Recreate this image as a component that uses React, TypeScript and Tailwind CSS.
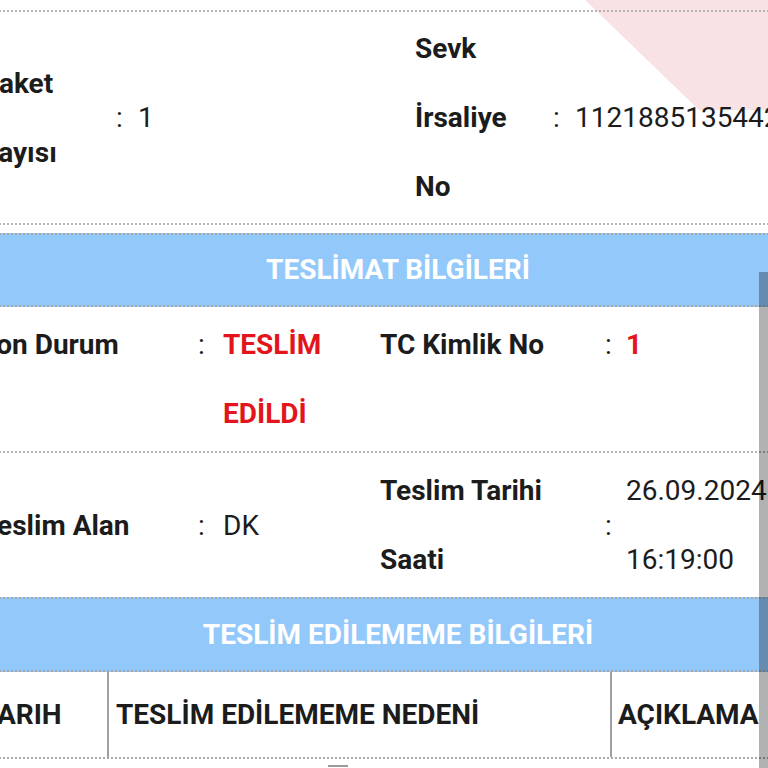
const Colon = ({ className = "" }: { className?: string }) => (
  <div className={`shrink-0 ${className}`}>:</div>
);

const App = () => {
  return (
    <div className="relative h-[768px] w-[768px] overflow-hidden bg-white font-['Roboto',sans-serif] text-[28px] text-[#1c1c1c]">
      {/* watermark corner */}
      <svg className="absolute right-0 top-0" width="183" height="112" viewBox="0 0 183 112">
        <polygon points="0,0 183,0 183,110 114,110" fill="#f9e2e4" />
      </svg>

      <div className="relative ml-[-25px] w-[846px] whitespace-nowrap">
        <div className="h-[12px] border-b-2 border-dotted border-[#b4b4b4]" />

        {/* Paket / irsaliye */}
        <div className="flex items-center border-b-2 border-dotted border-[#b4b4b4] py-[2px] leading-[69px]">
          <div className="w-[133px] shrink-0 pl-[6px] font-bold">
            Paket
            <br />
            Sayısı
          </div>
          <Colon className="w-[30px] pl-2" />
          <div className="w-[277px] shrink-0">1</div>
          <div className="w-[125px] shrink-0 font-bold">
            Sevk
            <br />
            İrsaliye
            <br />
            No
          </div>
          <Colon className="w-[35px] pl-[13px]" />
          <div className="flex-1">1121885135442</div>
        </div>

        <div className="h-[8px]" />

        {/* Teslimat bilgileri */}
        <div className="flex h-[74px] items-center justify-center border-y-2 border-dotted border-[#a8a8a8] bg-[#93c8fb] font-bold text-white">
          TESLİMAT BİLGİLERİ
        </div>

        <div className="flex items-start border-b-2 border-dotted border-[#b4b4b4] py-[3px] leading-[69px]">
          <div className="w-[223px] shrink-0 pl-[4px] font-bold">Son Durum</div>
          <Colon className="w-[25px]" />
          <div className="w-[157px] shrink-0 font-bold text-[#e3141c]">
            TESLİM
            <br />
            EDİLDİ
          </div>
          <div className="w-[225px] shrink-0 font-bold">TC Kimlik No</div>
          <Colon className="w-[21px]" />
          <div className="flex-1 font-bold text-[#e3141c]">1</div>
        </div>

        <div className="flex items-center py-[3px] leading-[69px]">
          <div className="w-[223px] shrink-0 pl-[6px] font-bold">Teslim Alan</div>
          <Colon className="w-[25px]" />
          <div className="w-[157px] shrink-0">DK</div>
          <div className="w-[225px] shrink-0 font-bold">
            Teslim Tarihi
            <br />
            Saati
          </div>
          <Colon className="w-[21px]" />
          <div className="flex-1">
            26.09.2024
            <br />
            16:19:00
          </div>
        </div>

        {/* Teslim edilememe bilgileri */}
        <div className="flex h-[75px] items-center justify-center border-y-2 border-dotted border-[#a8a8a8] bg-[#93c8fb] font-bold text-white">
          TESLİM EDİLEMEME BİLGİLERİ
        </div>

        <div className="flex h-[87px] items-stretch border-b-2 border-dotted border-[#a8a8a8] font-bold">
          <div className="flex w-[132px] shrink-0 items-center pl-[6px]">TARIH</div>
          <div className="flex w-[505px] shrink-0 items-center border-x-2 border-[#a0a0a0] pl-[7px]">
            TESLİM EDİLEMEME NEDENİ
          </div>
          <div className="flex flex-1 items-center pl-[6px]">AÇIKLAMA</div>
        </div>

        <div className="pl-[353px] pt-[6px]">
          <div className="h-[2px] w-[20px] bg-[#9a9a9a]" />
        </div>
      </div>

      {/* scrollbar */}
      <div className="absolute bottom-0 right-0 top-[272px] w-[9px] bg-black/30" />
    </div>
  );
};

export default App;
